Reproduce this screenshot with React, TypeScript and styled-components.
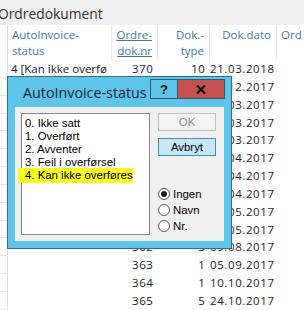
import React from "react";
import styled, { createGlobalStyle } from "styled-components";

const GlobalStyle = createGlobalStyle`
  html, body { margin: 0; padding: 0; background: #ffffff; overflow: hidden; }
  * { box-sizing: border-box; }
`;

const Page = styled.div`
  position: relative;
  width: 304px;
  height: 310px;
  overflow: hidden;
  background: #ffffff;
  font-family: "Open Sans", "Noto Sans", sans-serif;
`;

const Heading = styled.div`
  height: 25px;
  background: #f0f0f0;
  color: #333333;
  font-size: 13.8px;
  line-height: 25px;
  padding-top: 1px;
  text-indent: -2px;
  white-space: nowrap;
`;

const Table = styled.div`
  display: grid;
  grid-template-columns: 8px 104px 46px 52px 67px 1fr;
  grid-auto-rows: 17.85px;
  grid-template-rows: 35px;
  font-size: 11.5px;
  color: #1e1e1e;
`;

const Stub = styled.div<{ $head?: boolean }>`
  border-right: 1px solid #dedede;
  border-bottom: ${(p) => (p.$head ? "none" : "1px solid #e6e6e6")};
`;

const HeadCell = styled.div<{ $align?: "left" | "right"; $link?: boolean; $sep?: boolean }>`
  color: #3d78a8;
  line-height: 16px;
  padding: 2px 5px 0 4px;
  text-align: ${(p) => p.$align ?? "left"};
  text-decoration: ${(p) => (p.$link ? "underline" : "none")};
  border-right: ${(p) => (p.$sep ? "1px solid #e8e8e8" : "none")};
  white-space: nowrap;
  overflow: hidden;
`;

const Cell = styled.div<{ $num?: boolean }>`
  line-height: 17.85px;
  padding: ${(p) => (p.$num ? "0 4.5px 0 0" : "0 5px 0 3px")};
  text-align: ${(p) => (p.$num ? "right" : "left")};
  letter-spacing: ${(p) => (p.$num ? "0.6px" : "0")};
  white-space: nowrap;
  overflow: hidden;
`;

const Dialog = styled.div`
  position: absolute;
  left: 7px;
  top: 76px;
  width: 225px;
  height: 173px;
  background: #5ec4e8;
  border: 1px solid #2d6f8c;
  display: flex;
  flex-direction: column;
  padding: 0 7px 7px 7px;
`;

const Caption = styled.div`
  height: 30px;
  display: flex;
  align-items: flex-start;
  justify-content: space-between;
`;

const CaptionTitle = styled.div`
  font-family: "Open Sans", "Noto Sans", sans-serif;
  font-size: 14.3px;
  color: #1b2733;
  padding: 6px 0 0 8px;
  white-space: nowrap;
`;

const CaptionButtons = styled.div`
  display: flex;
  margin-top: 2px;
  margin-right: -1px;
`;

const CapButton = styled.div<{ $close?: boolean }>`
  width: ${(p) => (p.$close ? "47px" : "28px")};
  height: 20px;
  display: flex;
  align-items: center;
  justify-content: center;
  background: ${(p) => (p.$close ? "#c75050" : "#5ec4e8")};
  border: 1px solid #2d5a6e;
  border-left: ${(p) => (p.$close ? "none" : "1px solid #2d5a6e")};
  color: #111;
  font-family: "Liberation Sans", Arial, sans-serif;
  font-weight: bold;
  font-size: 13px;
`;

const Client = styled.div`
  flex: 1;
  background: #f0f0f0;
  display: flex;
  gap: 8px;
  padding: 6px 8px 6px 6px;
  font-family: "Liberation Sans", Arial, sans-serif;
  font-size: 11.4px;
  color: #000;
`;

const ListBox = styled.div`
  width: 129px;
  background: #fff;
  border: 1px solid #828790;
  padding: 3px 0 0 3px;
`;

const ListItem = styled.div<{ $marked?: boolean }>`
  position: relative;
  height: 13px;
  line-height: 13px;
  white-space: nowrap;
  &::before {
    content: "";
    display: ${(p) => (p.$marked ? "block" : "none")};
    position: absolute;
    left: -7px;
    top: -1px;
    width: 115px;
    height: 15px;
    background: #fafa1e;
  }
`;

const ItemText = styled.span`
  position: relative;
`;

const Side = styled.div`
  flex: 1;
  display: flex;
  flex-direction: column;
`;

const PushButton = styled.div<{ $default?: boolean; $disabled?: boolean }>`
  height: 18px;
  margin-bottom: 7px;
  display: flex;
  align-items: center;
  justify-content: center;
  border: 1px solid ${(p) => (p.$default ? "#3c8fcf" : "#bfbfbf")};
  background: ${(p) => (p.$default ? "#c9e5f8" : "#f4f4f4")};
  color: ${(p) => (p.$disabled ? "#8a8a8a" : "#000")};
`;

const RadioGroup = styled.div`
  margin-top: auto;
  margin-bottom: 1px;
  display: flex;
  flex-direction: column;
`;

const RadioRow = styled.div`
  height: 16px;
  display: flex;
  align-items: center;
  gap: 3px;
`;

const RadioCircle = styled.span<{ $on?: boolean }>`
  width: 12px;
  height: 12px;
  border-radius: 50%;
  border: 1px solid #555;
  background: #fff;
  display: flex;
  align-items: center;
  justify-content: center;
  &::after {
    content: "";
    display: ${(p) => (p.$on ? "block" : "none")};
    width: 6px;
    height: 6px;
    border-radius: 50%;
    background: #1a1a1a;
  }
`;

type Row = { status?: string; nr: string; type: string; date: string };

const rows: Row[] = [
  { status: "4 [Kan ikke overfø", nr: "370", type: "10", date: "21.03.2018" },
  { nr: "351", type: "1", date: "12.12.2017" },
  { nr: "352", type: "1", date: "01.03.2017" },
  { nr: "353", type: "1", date: "08.03.2017" },
  { nr: "354", type: "1", date: "22.03.2017" },
  { nr: "355", type: "1", date: "03.04.2017" },
  { nr: "356", type: "1", date: "10.04.2017" },
  { nr: "357", type: "1", date: "24.04.2017" },
  { nr: "358", type: "1", date: "02.05.2017" },
  { nr: "359", type: "1", date: "15.05.2017" },
  { nr: "362", type: "3", date: "09.08.2017" },
  { nr: "363", type: "1", date: "05.09.2017" },
  { nr: "364", type: "1", date: "10.10.2017" },
  { nr: "365", type: "5", date: "24.10.2017" },
];

const items = [
  "0. Ikke satt",
  "1. Overført",
  "2. Avventer",
  "3. Feil i overførsel",
  "4. Kan ikke overføres",
];

export default function App() {
  return (
    <Page>
      <GlobalStyle />
      <Heading>Ordredokument</Heading>
      <Table>
        <Stub $head />
        <HeadCell $sep>
          AutoInvoice-
          <br />
          status
        </HeadCell>
        <HeadCell $align="right" $link $sep>
          Ordre-
          <br />
          dok.nr
        </HeadCell>
        <HeadCell $align="right" $sep>
          Dok.-
          <br />
          type
        </HeadCell>
        <HeadCell $align="right" $sep>
          Dok.dato
        </HeadCell>
        <HeadCell>Ord</HeadCell>
        {rows.map((r, i) => (
          <React.Fragment key={i}>
            <Stub />
            <Cell>{r.status ?? ""}</Cell>
            <Cell $num>{r.nr}</Cell>
            <Cell $num>{r.type}</Cell>
            <Cell $num>{r.date}</Cell>
            <Cell />
          </React.Fragment>
        ))}
      </Table>

      <Dialog>
        <Caption>
          <CaptionTitle>AutoInvoice-status</CaptionTitle>
          <CaptionButtons>
            <CapButton>?</CapButton>
            <CapButton $close>
              <svg width="10" height="9" viewBox="0 0 10 9">
                <path d="M1 0.5 L9 8.5 M9 0.5 L1 8.5" stroke="#111" strokeWidth="2.2" />
              </svg>
            </CapButton>
          </CaptionButtons>
        </Caption>
        <Client>
          <ListBox>
            {items.map((t, i) => (
              <ListItem key={t} $marked={i === 4}>
                <ItemText>{t}</ItemText>
              </ListItem>
            ))}
          </ListBox>
          <Side>
            <PushButton $disabled>OK</PushButton>
            <PushButton $default>Avbryt</PushButton>
            <RadioGroup>
              <RadioRow>
                <RadioCircle $on />
                Ingen
              </RadioRow>
              <RadioRow>
                <RadioCircle />
                Navn
              </RadioRow>
              <RadioRow>
                <RadioCircle />
                Nr.
              </RadioRow>
            </RadioGroup>
          </Side>
        </Client>
      </Dialog>
    </Page>
  );
}
